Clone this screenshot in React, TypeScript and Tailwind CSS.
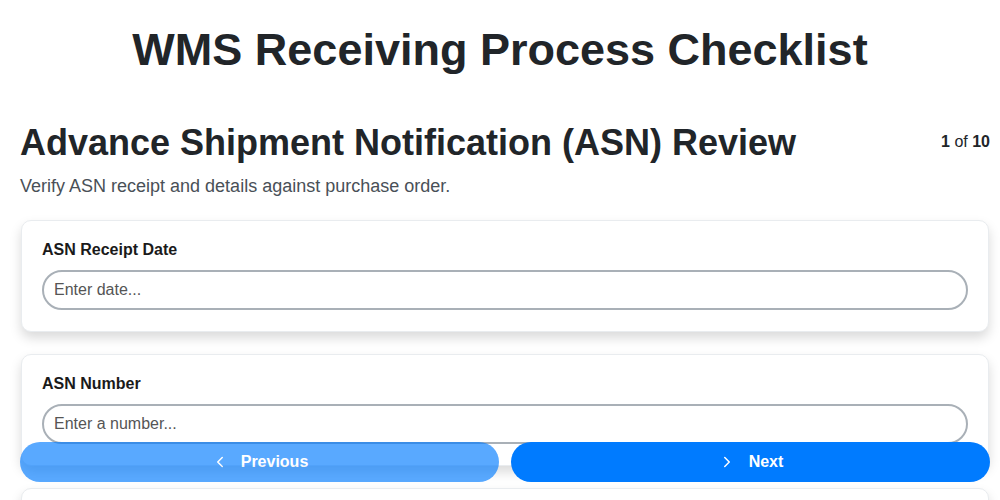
import React from 'react';
import { ChevronLeft, ChevronRight } from 'lucide-react';

const fields = [
  { label: 'ASN Receipt Date', placeholder: 'Enter date...' },
  { label: 'ASN Number', placeholder: 'Enter a number...' },
  { label: 'Purchase Order Number', placeholder: 'Enter a number...' },
];

export default function App() {
  return (
    <div className="min-h-screen bg-white text-[#212529] font-['Liberation_Sans',Arial,sans-serif]">
      <h1 className="pt-[23px] text-center text-[45px] leading-[54px] font-bold text-[#212529]">
        WMS Receiving Process Checklist
      </h1>

      <div className="ml-5 mr-[10px] mt-[44px] pb-24">
        <div className="flex items-start justify-between">
          <h2 className="text-[36px] leading-[44px] font-bold">
            Advance Shipment Notification (ASN) Review
          </h2>
          <div className="pt-[11px] text-[16px] leading-5">
            <span className="font-bold">1</span> of <span className="font-bold">10</span>
          </div>
        </div>
        <p className="mt-[9px] text-[18px] leading-6 text-[#495057]">
          Verify ASN receipt and details against purchase order.
        </p>

        <div className="mt-[22px] flex flex-col gap-[22px]">
          {fields.map((f) => (
            <div
              key={f.label}
              className="ml-px mr-px rounded-[10px] border border-[#e9ecef] bg-white px-5 pt-[19px] pb-[21px] shadow-[0_6px_12px_rgba(0,0,0,0.15)]"
            >
              <label className="block text-[16px] leading-5 font-bold text-[#1a1a1a]">{f.label}</label>
              <input
                placeholder={f.placeholder}
                className="mt-[10px] block h-[40px] w-full rounded-full border-2 border-[#a9b0b7] bg-white px-[10px] text-[16px] text-[#333] outline-none placeholder:text-[#555]"
              />
            </div>
          ))}
        </div>
      </div>

      <div className="fixed bottom-[18px] left-5 right-[10px] flex gap-3">
        <button
          disabled
          className="flex h-[40px] flex-1 items-center justify-center gap-[12px] rounded-full bg-[#007bff] text-[16px] font-bold text-white opacity-65"
        >
          <ChevronLeft className="h-[18px] w-[18px]" strokeWidth={2} />
          Previous
        </button>
        <button className="flex h-[40px] flex-1 items-center justify-center gap-[13px] rounded-full bg-[#007bff] text-[16px] font-bold text-white">
          <ChevronRight className="h-[18px] w-[18px]" strokeWidth={2} />
          Next
        </button>
      </div>
    </div>
  );
}
